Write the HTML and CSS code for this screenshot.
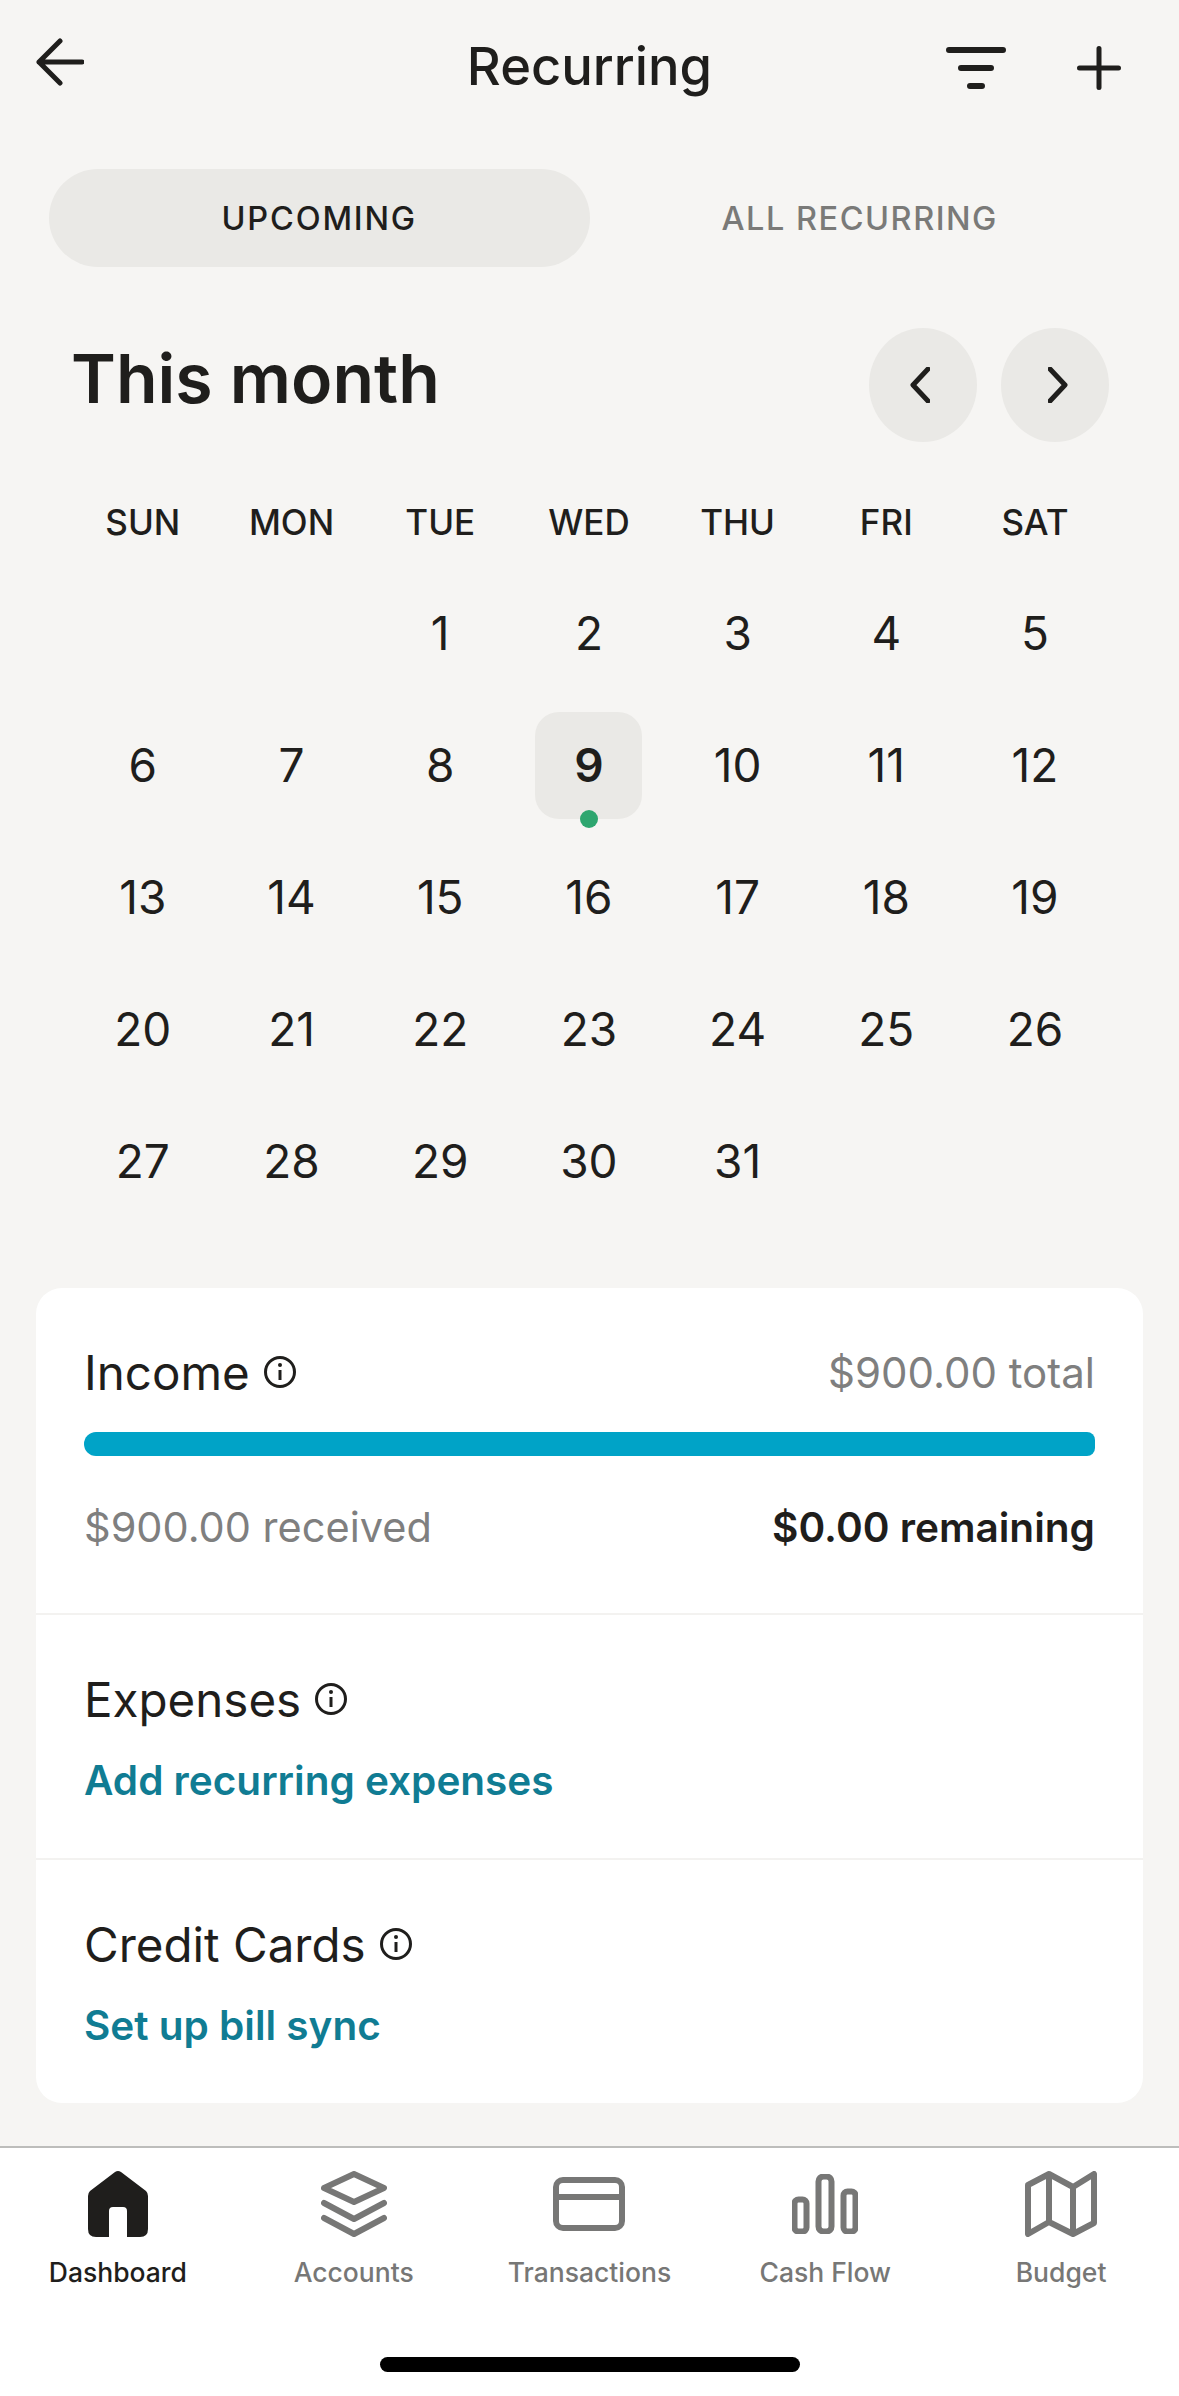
FILE: index.html
```html
<!DOCTYPE html>
<html lang="en">
<head>
    <meta charset="UTF-8">
    <meta name="viewport" content="width=device-width, initial-scale=1.0">
    <title>Recurring</title>
    <link rel="stylesheet" href="styles.css">
</head>
<body>

<div id="screen">
    <header class="topbar">
        <svg class="back-icon" viewBox="0 0 48 48" width="48" height="48"><path d="M24 3 L3 24 L24 45 M3 24 H46"/></svg>
        <h1 class="page-title">Recurring</h1>
        <div class="top-actions">
            <svg class="line-icon" viewBox="0 0 60 42" width="60" height="42"><path d="M3 3 H57 M15 21 H45 M24 39 H36"/></svg>
            <svg class="line-icon plus" viewBox="0 0 44 44" width="44" height="44"><path d="M2.5 22 H41.5 M22 2.5 V41.5"/></svg>
        </div>
    </header>

    <div class="tabs">
        <div class="tab active">UPCOMING</div>
        <div class="tab">ALL RECURRING</div>
    </div>

    <div class="month-row">
        <h2 class="month-title">This month</h2>
        <div class="month-nav">
            <div class="nav-btn"><svg class="chevron left" viewBox="0 0 20 36" width="20" height="36"><path d="M18 2 L3 18 L18 34"/></svg></div>
            <div class="nav-btn"><svg class="chevron right" viewBox="0 0 20 36" width="20" height="36"><path d="M2 2 L17 18 L2 34"/></svg></div>
        </div>
    </div>

    <div class="calendar">
        <div class="weekday">SUN</div>
        <div class="weekday">MON</div>
        <div class="weekday">TUE</div>
        <div class="weekday">WED</div>
        <div class="weekday">THU</div>
        <div class="weekday">FRI</div>
        <div class="weekday">SAT</div>

        <div class="day"></div>
        <div class="day"></div>
        <div class="day">1</div>
        <div class="day">2</div>
        <div class="day">3</div>
        <div class="day">4</div>
        <div class="day">5</div>

        <div class="day">6</div>
        <div class="day">7</div>
        <div class="day">8</div>
        <div class="day today"><span class="today-box">9<span class="today-dot"></span></span></div>
        <div class="day">10</div>
        <div class="day">11</div>
        <div class="day">12</div>

        <div class="day">13</div>
        <div class="day">14</div>
        <div class="day">15</div>
        <div class="day">16</div>
        <div class="day">17</div>
        <div class="day">18</div>
        <div class="day">19</div>

        <div class="day">20</div>
        <div class="day">21</div>
        <div class="day">22</div>
        <div class="day">23</div>
        <div class="day">24</div>
        <div class="day">25</div>
        <div class="day">26</div>

        <div class="day">27</div>
        <div class="day">28</div>
        <div class="day">29</div>
        <div class="day">30</div>
        <div class="day">31</div>
    </div>

    <div class="card">
        <section class="card-section income">
            <div class="row">
                <div class="label">Income <svg class="info-icon" viewBox="0 0 34 34" width="34" height="34"><circle cx="17" cy="17" r="14.5"/><path d="M17 15 V25"/><circle class="info-dot" cx="17" cy="10" r="2"/></svg></div>
                <div class="muted">$900.00 total</div>
            </div>
            <div class="progress"></div>
            <div class="row">
                <div class="muted received">$900.00 received</div>
                <div class="remaining">$0.00 remaining</div>
            </div>
        </section>
        <section class="card-section">
            <div class="label">Expenses <svg class="info-icon" viewBox="0 0 34 34" width="34" height="34"><circle cx="17" cy="17" r="14.5"/><path d="M17 15 V25"/><circle class="info-dot" cx="17" cy="10" r="2"/></svg></div>
            <div class="link">Add recurring expenses</div>
        </section>
        <section class="card-section">
            <div class="label">Credit Cards <svg class="info-icon" viewBox="0 0 34 34" width="34" height="34"><circle cx="17" cy="17" r="14.5"/><path d="M17 15 V25"/><circle class="info-dot" cx="17" cy="10" r="2"/></svg></div>
            <div class="link">Set up bill sync</div>
        </section>
    </div>

    <nav class="tabbar">
        <div class="tabbar-item current">
            <div class="tabbar-icon">
                <svg viewBox="0 0 60 66" width="60" height="66"><path class="solid" d="M27 1 Q30 -1 33 1 L58 20 Q60 22 60 25 V58 Q60 66 52 66 H39 V40 Q39 36 35 36 H25 Q21 36 21 40 V66 H8 Q0 66 0 58 V25 Q0 22 2 20 Z"/></svg>
            </div>
            <span>Dashboard</span>
        </div>
        <div class="tabbar-item">
            <div class="tabbar-icon">
                <svg viewBox="0 0 66 66" width="66" height="66"><path d="M33 3 L63 17 L33 31 L3 17 Z M3 32 L33 48 L63 32 M3 47 L33 63 L63 47"/></svg>
            </div>
            <span>Accounts</span>
        </div>
        <div class="tabbar-item">
            <div class="tabbar-icon">
                <svg viewBox="0 0 72 54" width="72" height="54"><rect x="3" y="3" width="66" height="48" rx="7"/><path d="M3 20 H69"/></svg>
            </div>
            <span>Transactions</span>
        </div>
        <div class="tabbar-item">
            <div class="tabbar-icon">
                <svg viewBox="0 0 66 60" width="66" height="60"><rect x="2.5" y="25.5" width="12" height="32" rx="4"/><rect x="26.5" y="2.5" width="13" height="55" rx="5"/><rect x="51.5" y="17.5" width="12" height="40" rx="4"/></svg>
            </div>
            <span>Cash Flow</span>
        </div>
        <div class="tabbar-item">
            <div class="tabbar-icon">
                <svg viewBox="0 0 72 66" width="72" height="66"><path d="M3 14 L24 3 L48 16 L69 3 V52 L48 63 L24 51 L3 63 Z M24 3 V51 M48 16 V63"/></svg>
            </div>
            <span>Budget</span>
        </div>
    </nav>

    <div class="home-bar"></div>
</div>

</body>
</html>
```

FILE: styles.css
```css
* {
    box-sizing: border-box;
}

body {
    margin: 0;
    font-family: Inter, "Liberation Sans", sans-serif;
    background-color: #f6f5f3;
    color: #1f1e1c;
}

#screen {
    width: 1179px;
    height: 2396px;
    display: flex;
    flex-direction: column;
    overflow: hidden;
}

svg {
    fill: none;
    display: block;
}

/* top bar */
.topbar {
    height: 124px;
    padding: 0 36px;
    display: grid;
    grid-template-columns: 1fr auto 1fr;
    align-items: center;
}

.back-icon path,
.line-icon path,
.chevron path {
    stroke: #1f1e1c;
    stroke-width: 5;
    stroke-linecap: round;
    stroke-linejoin: round;
}

.line-icon path {
    stroke-width: 6;
}

.line-icon.plus path {
    stroke-width: 5;
}

.page-title {
    margin: 8px 0 0;
    font-size: 52.5px;
    font-weight: 550;
}

.top-actions {
    display: flex;
    justify-content: flex-end;
    align-items: center;
    gap: 71px;
    padding-right: 22px;
    margin-top: 12px;
}

/* segmented tabs */
.tabs {
    margin-top: 45px;
    padding: 0 49px;
    display: flex;
}

.tab {
    width: 541px;
    height: 98px;
    border-radius: 49px;
    display: flex;
    align-items: center;
    justify-content: center;
    font-size: 32.5px;
    font-weight: 500;
    letter-spacing: 1.5px;
    color: #7a7a78;
}

.tab.active {
    background-color: #eae9e6;
    color: #1f1e1c;
    letter-spacing: 1.8px;
}

/* month heading */
.month-row {
    margin-top: 61px;
    height: 114px;
    padding: 0 70px 0 71px;
    display: flex;
    justify-content: space-between;
    align-items: center;
}

.month-title {
    margin: 0 0 14px;
    font-size: 68px;
    font-weight: 600;
}

.month-nav {
    display: flex;
    gap: 24px;
}

.nav-btn {
    width: 108px;
    height: 114px;
    border-radius: 50%;
    background-color: #eae9e6;
    display: flex;
    align-items: center;
    justify-content: center;
}

.chevron.left {
    margin-right: 6px;
}

.chevron.right {
    margin-left: 6px;
}

/* calendar */
.calendar {
    margin-top: 34px;
    padding-left: 68.5px;
    display: grid;
    grid-template-columns: repeat(7, 148.7px);
    grid-template-rows: 91px repeat(5, 132px);
}

.weekday {
    display: flex;
    align-items: center;
    justify-content: center;
    font-size: 35px;
    font-weight: 550;
}

.day {
    display: flex;
    align-items: center;
    justify-content: center;
    font-size: 46px;
}

.today-box {
    position: relative;
    width: 107px;
    height: 107px;
    border-radius: 24px;
    background-color: #eae9e6;
    display: flex;
    align-items: center;
    justify-content: center;
    font-weight: 600;
}

.today-dot {
    position: absolute;
    left: 45px;
    bottom: -9px;
    width: 18px;
    height: 18px;
    border-radius: 50%;
    background-color: #2ea66f;
}

/* summary card */
.card {
    margin: 0 36px;
    margin-top: 61px;
    background-color: #ffffff;
    border-radius: 26px;
    height: 815px;
}

.card-section {
    height: 245px;
    padding: 56px 48px 0 48px;
    border-top: 2px solid #f3f2f0;
}

.card-section:first-child {
    border-top: none;
}

.card-section.income {
    height: 325px;
    padding-top: 56px;
}

.row {
    display: flex;
    justify-content: space-between;
    align-items: center;
}

.label {
    display: flex;
    align-items: center;
    gap: 13px;
    height: 56px;
    font-size: 47.5px;
}

.info-icon circle,
.info-icon path {
    stroke: #1f1e1c;
    stroke-width: 3;
}

.info-icon .info-dot {
    fill: #1f1e1c;
    stroke: none;
}

.muted {
    font-size: 42px;
    color: #7f7f7f;
}

.muted.received {
    font-size: 41.5px;
}

.remaining {
    font-size: 40.6px;
    font-weight: 600;
}

.progress {
    height: 24px;
    margin: 32px 0 46px;
    border-radius: 12px 8px 8px 12px;
    background-color: #00a3c7;
}

.link {
    margin-top: 29px;
    font-size: 40.5px;
    font-weight: 600;
    color: #107c93;
}

/* bottom tabs */
.tabbar {
    margin-top: 43px;
    flex: 1;
    background-color: #ffffff;
    border-top: 2px solid #bdbdbb;
    display: flex;
    padding-top: 20px;
}

.tabbar-item {
    width: 20%;
    display: flex;
    flex-direction: column;
    align-items: center;
    font-size: 26.5px;
    font-weight: 500;
    color: #777776;
}

.tabbar-item.current {
    color: #1f1e1c;
}

.tabbar-icon {
    height: 72px;
    display: flex;
    align-items: center;
    justify-content: center;
    margin-bottom: 16px;
}

.tabbar-icon svg * {
    stroke: #777776;
    stroke-width: 6;
    stroke-linejoin: round;
    stroke-linecap: round;
}

.tabbar-icon svg .solid {
    fill: #1f1e1c;
    stroke: none;
}

.home-bar {
    position: absolute;
    left: 380px;
    top: 2357px;
    width: 420px;
    height: 15px;
    border-radius: 8px;
    background-color: #000000;
}
```
